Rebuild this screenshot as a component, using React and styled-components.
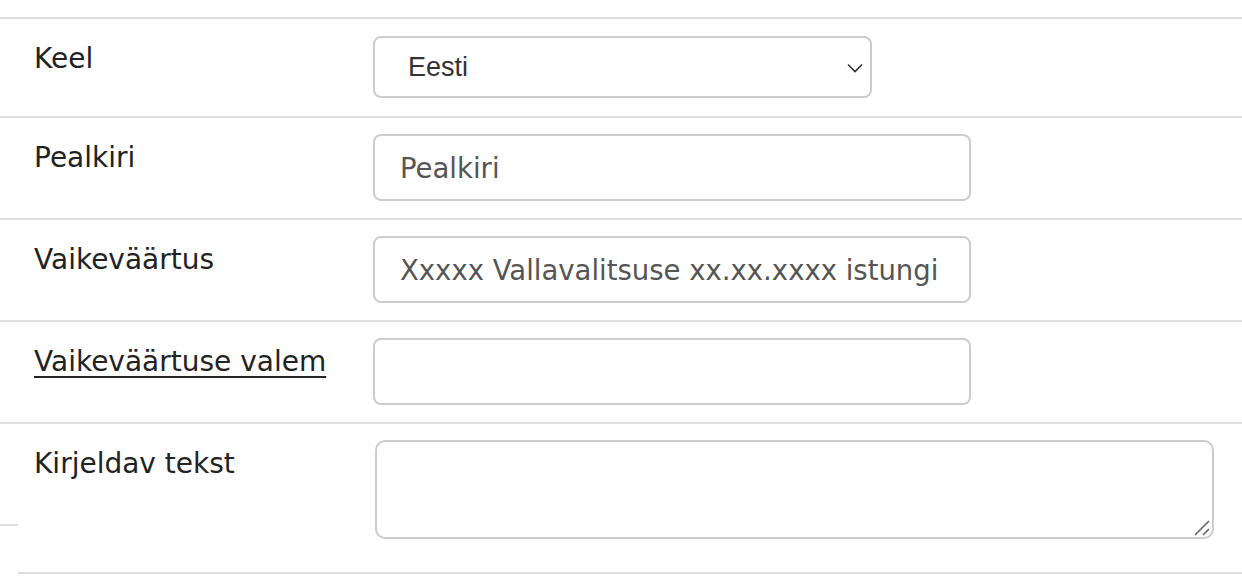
import styled, { createGlobalStyle } from "styled-components";

const GlobalStyle = createGlobalStyle`
  html, body {
    margin: 0;
    padding: 0;
    background: #fff;
  }
  body {
    font-family: "DejaVu Sans", Verdana, sans-serif;
    color: #222;
  }
`;

const Form = styled.div`
  width: 1242px;
  padding-top: 17px;
`;

const Row = styled.div`
  display: grid;
  grid-template-columns: 18px 355px 1fr;
  border-top: 2px solid #dedede;
`;

// the left gutter keeps its own short line in the closing row
const Gutter = styled.div`
  align-self: start;
  height: ${(p) => (p.$closing ? "100px" : "auto")};
  border-bottom: ${(p) => (p.$closing ? "2px solid #dedede" : "none")};
`;

const LabelCell = styled.div`
  padding: 24px 16px 0;
  font-size: 28px;
  line-height: 32px;
  color: #222;
  border-bottom: ${(p) => (p.$closing ? "2px solid #dedede" : "none")};
`;

const Label = styled.span`
  text-decoration: ${(p) => (p.$link ? "underline" : "none")};
  text-decoration-thickness: 2px;
  text-underline-offset: 5px;
  cursor: ${(p) => (p.$link ? "pointer" : "default")};
`;

const ControlCell = styled.div`
  padding: ${(p) => p.$pad || "16px 0 17px"};
  padding-right: 28px;
  border-bottom: ${(p) => (p.$closing ? "2px solid #dedede" : "none")};
`;

const SelectWrap = styled.div`
  position: relative;
  width: 499px;
`;

const Select = styled.select`
  appearance: none;
  box-sizing: border-box;
  width: 100%;
  height: 62px;
  padding: 0 40px 0 33px;
  border: 2px solid #cccccc;
  border-radius: 8px;
  background: #fff;
  font-family: "Liberation Sans", Arial, sans-serif;
  font-size: 27px;
  color: #333;
  outline: none;
`;

const Chevron = styled.svg`
  position: absolute;
  right: 9px;
  top: 27px;
  pointer-events: none;
`;

const Input = styled.input`
  box-sizing: border-box;
  display: block;
  width: 598px;
  height: 67px;
  padding: 0 22px 0 25px;
  border: 2px solid #cccccc;
  border-radius: 8px;
  font-family: "DejaVu Sans", Verdana, sans-serif;
  font-size: 27.5px;
  color: #555;
  outline: none;
`;

const AreaWrap = styled.div`
  position: relative;
  margin-left: 2px;
  width: 839px;
`;

const TextArea = styled.textarea`
  box-sizing: border-box;
  display: block;
  width: 100%;
  height: 99px;
  padding: 10px 25px;
  border: 2px solid #cccccc;
  border-radius: 10px;
  font-family: "DejaVu Sans", Verdana, sans-serif;
  font-size: 27px;
  color: #555;
  resize: none;
  outline: none;
`;

const Grip = styled.svg`
  position: absolute;
  right: 3px;
  bottom: 2px;
  pointer-events: none;
`;

const fields = [
  { label: "Pealkiri", value: "Pealkiri" },
  { label: "Vaikeväärtus", value: "Xxxxx Vallavalitsuse xx.xx.xxxx istungi protokoll" },
  { label: "Vaikeväärtuse valem", value: "", link: true },
];

function App() {
  return (
    <>
      <GlobalStyle />
      <Form>
        <Row>
          <Gutter />
          <LabelCell>
            <Label>Keel</Label>
          </LabelCell>
          <ControlCell $pad="17px 0 18px">
            <SelectWrap>
              <Select defaultValue="et">
                <option value="et">Eesti</option>
                <option value="en">English</option>
              </Select>
              <Chevron width="16" height="10" viewBox="0 0 16 10">
                <path d="M1 1.5 L8 8.5 L15 1.5" fill="none" stroke="#333" strokeWidth="1.6" />
              </Chevron>
            </SelectWrap>
          </ControlCell>
        </Row>
        {fields.map((f) => (
          <Row key={f.label}>
            <Gutter />
            <LabelCell>
              <Label $link={f.link}>{f.label}</Label>
            </LabelCell>
            <ControlCell>
              <Input defaultValue={f.value} />
            </ControlCell>
          </Row>
        ))}
        <Row>
          <Gutter $closing />
          <LabelCell $closing>
            <Label>Kirjeldav tekst</Label>
          </LabelCell>
          <ControlCell $closing $pad="16px 0 33px">
            <AreaWrap>
              <TextArea />
              <Grip width="18" height="18" viewBox="0 0 18 18">
                <path d="M2 16 L16 2 M10 16 L16 10" stroke="#666" strokeWidth="1.6" />
              </Grip>
            </AreaWrap>
          </ControlCell>
        </Row>
      </Form>
    </>
  );
}

export default App;
